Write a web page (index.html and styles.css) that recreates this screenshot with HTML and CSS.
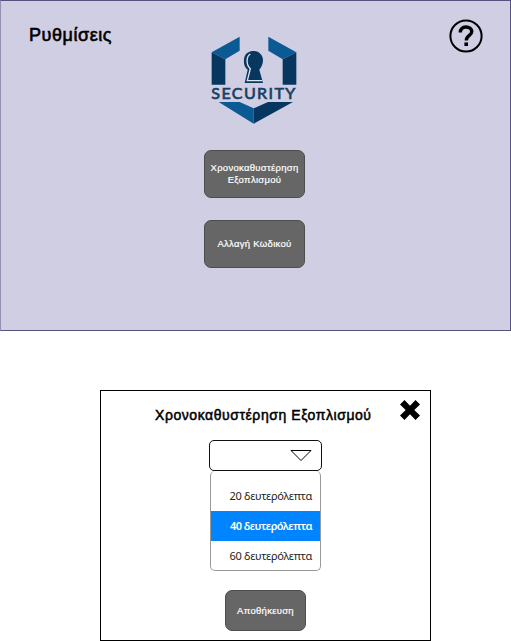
FILE: index.html
```html
<!DOCTYPE html>
<html lang="el">
<head>
<meta charset="utf-8">
<title>Ρυθμίσεις</title>
<link rel="stylesheet" href="styles.css">
</head>
<body>
<main class="settings">
  <h1 class="title"><span>Ρυθμίσεις</span></h1>
  <div class="center">
    <svg class="logo" viewBox="0 0 330 300" role="img">
      <path fill="#0b5a94" d="M35 67 119 20V62L76 88ZM205 20 289 67 248 88 205 62ZM56 216H119L161 235V281Z"/>
      <path fill="#07375f" d="M35 67 76 88V164H35ZM289 67V164H248V88ZM161 235 204 216H279L161 281Z"/>
      <path fill="#07375f" d="M134 159 143 119C130 110 130 91 134 79C139 67 150 63 161 63C178 63 189 76 189 91C189 103 184 112 178 119L189 159Z"/>
      <path fill="none" stroke="#dfe3ef" stroke-width="4" d="M151 72C139 79 137 103 151 116L142 152H187"/>
      <text x="34" y="207" textLength="256" lengthAdjust="spacingAndGlyphs">SECURITY</text>
    </svg>
    <button class="btn delay"><span>Χρονοκαθυστέρηση<br>Εξοπλισμού</span></button>
    <button class="btn code"><span>Αλλαγή Κωδικού</span></button>
  </div>
  <svg class="help" viewBox="0 0 34 34">
    <circle cx="17" cy="17" r="15.6" fill="none" stroke="#000" stroke-width="2"/>
    <path fill="none" stroke="#000" stroke-width="3.4" d="M11.3 13.6C11.3 9.8 13.4 8 17 8C20.5 8 22.8 9.8 22.8 12.6C22.8 16.7 17.3 16.2 17.3 21.6"/>
    <path d="M15.4 23.4H19V27H15.4Z"/>
  </svg>
</main>
<section class="dialog">
  <h2 class="dialog-title"><span>Χρονοκαθυστέρηση Εξοπλισμού</span></h2>
  <svg class="close" viewBox="0 0 20 20"><path d="M4.5 0 10 5.8 15.5 0 20 4.4 14.3 10 20 15.6 15.5 20 10 14.2 4.5 20 0 15.6 5.7 10 0 4.4Z"/></svg>
  <div class="select">
    <svg class="arrow" viewBox="0 0 22 13"><path fill="none" stroke="#000" d="M1 1.5H21L11 11.5Z"/></svg>
  </div>
  <ul class="options">
    <li><span>20 δευτερόλεπτα</span></li>
    <li class="selected"><span>40 δευτερόλεπτα</span></li>
    <li><span>60 δευτερόλεπτα</span></li>
  </ul>
  <button class="btn save"><span>Αποθήκευση</span></button>
</section>
</body>
</html>
```
FILE: styles.css
```css
* { box-sizing: border-box; }
body { margin: 0; background: #fff; font-family: "Liberation Sans", Arial, sans-serif; }
.settings {
  width: 511px; height: 331px;
  display: grid; grid-template-columns: 199px 110px 1fr; align-items: start;
  background: #d0cee2; border: 1px solid #56517e; border-left-color: #9390b6;
}
.title { margin: 24px 0 0 28px; font-size: 18px; font-weight: 400; line-height: 21px; letter-spacing: 0.55px; white-space: nowrap; -webkit-text-stroke: 0.6px #000; }
.center { display: flex; flex-direction: column; align-items: center; }
.logo { width: 110px; height: 100px; margin: 29px 0 20px; }
.logo text { font: 400 47px Lato, sans-serif; letter-spacing: 4px; fill: #173f65; stroke: #173f65; stroke-width: 2px; }
.help { width: 34px; height: 34px; margin: 18px 0 0 139px; }
.btn {
  display: flex; align-items: center; justify-content: center; padding: 0;
  border: 1px solid #4d4d4d; border-radius: 7px; background: #666; color: #fff;
  font: 9.5px/12px "Liberation Sans", Arial, sans-serif; text-align: center; white-space: nowrap;
  letter-spacing: 0.29px; -webkit-text-stroke: 0.2px #fff;
}
.delay, .code { width: 101px; height: 48px; margin-right: 1px; }
.code { margin-top: 22px; }
.dialog {
  width: 331px; height: 251px; margin: 59px 0 0 100px;
  display: grid; grid-template-columns: 1fr; grid-template-rows: 49px 31px 100px 1fr;
  border: 1px solid #000; position: relative;
}
.dialog-title { margin: 16px 0 0 54px; font-size: 14px; font-weight: 400; line-height: 16px; letter-spacing: 0.56px; white-space: nowrap; -webkit-text-stroke: 0.5px #000; }
.close { position: absolute; top: 9px; right: 10px; width: 20px; height: 20px; }
.select {
  width: 113px; height: 31px; margin-left: 108px; padding-right: 9px;
  display: flex; align-items: center; justify-content: flex-end;
  border: 1px solid #111; border-radius: 5px;
}
.arrow { width: 22px; height: 13px; }
.options {
  width: 111px; height: 100px; margin: 0 0 0 109px; padding: 10px 0 0; list-style: none;
  border: 1px solid #999; border-top: 0; border-radius: 5px; overflow: hidden;
  font: 11px/30px "Noto Sans", sans-serif; color: #222; letter-spacing: -0.3px;
}
.options li { height: 30px; padding-right: 8px; text-align: right; white-space: nowrap; }
.options .selected { background: #0084ff; color: #fff; font-weight: 600; letter-spacing: -0.55px; }
.save { width: 81px; height: 41px; margin: 19px 0 0 124px; }
```
